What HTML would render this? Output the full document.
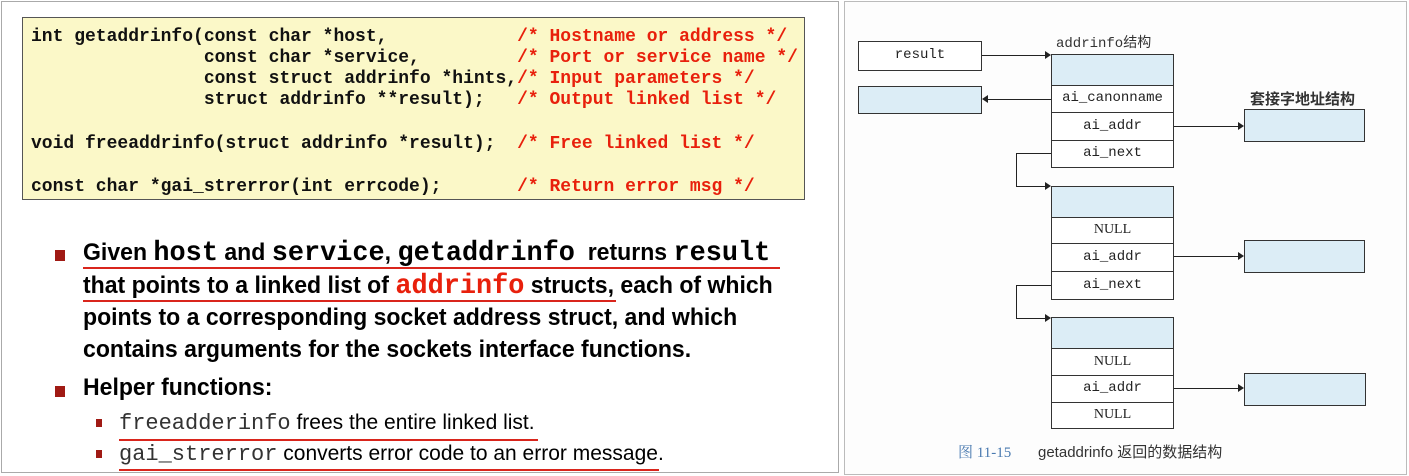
<!DOCTYPE html>
<html><head><meta charset="utf-8"><style>
body{margin:0;width:1409px;height:476px;background:#fff;position:relative;overflow:hidden;font-family:"Liberation Sans",sans-serif}
.a{position:absolute;white-space:nowrap}
.code{font-family:"Liberation Mono",monospace;font-weight:bold;font-size:18px;color:#111;line-height:21px;white-space:pre}
.r{color:#e8200c}
.b{font-weight:bold;font-size:24px;color:#000;transform:scaleX(.96);transform-origin:left top;line-height:32px}
.m{font-family:"Liberation Mono",monospace}
.b .m{font-size:28px;line-height:20px}
.ul{position:absolute;height:2px;background:#d9251c}
.sq{position:absolute;background:#a01a14}
.s{font-size:21px;transform:scaleX(1.0);transform-origin:left top}
.s .m{font-size:22px}
.bx{position:absolute;border:1.5px solid #333;box-sizing:border-box;background:#fff;font-family:"Liberation Mono",monospace;font-size:14px;color:#222;text-align:center}
.bl{background:#dcedf6}
.ln{position:absolute;background:#222}
.ar{position:absolute;width:0;height:0;border-top:4px solid transparent;border-bottom:4px solid transparent}
</style></head><body>
<div style="position:absolute;left:1px;top:1px;width:836px;height:470px;border:1px solid #aaa"></div>
<div style="position:absolute;left:22px;top:17px;width:783px;height:183px;background:#fbf8c8;border:1.5px solid #555;box-sizing:border-box"></div>
<div class="a code" style="left:31px;top:27px">int getaddrinfo(const char *host,            <span class="r">/* Hostname or address */</span></div>
<div class="a code" style="left:31px;top:48px">                const char *service,         <span class="r">/* Port or service name */</span></div>
<div class="a code" style="left:31px;top:69px">                const struct addrinfo *hints,<span class="r">/* Input parameters */</span></div>
<div class="a code" style="left:31px;top:90px">                struct addrinfo **result);   <span class="r">/* Output linked list */</span></div>
<div class="a code" style="left:31px;top:134px">void freeaddrinfo(struct addrinfo *result);  <span class="r">/* Free linked list */</span></div>
<div class="a code" style="left:31px;top:177px">const char *gai_strerror(int errcode);       <span class="r">/* Return error msg */</span></div>

<div class="sq" style="left:55px;top:250px;width:10px;height:11px"></div>
<div class="a b" style="left:83px;top:237px">Given <span class="m">host</span> and <span class="m">service</span>, <span class="m">getaddrinfo</span> &nbsp;returns <span class="m">result</span></div>
<div class="ul" style="left:83px;top:267px;width:697px"></div>
<div class="a b" style="left:83px;top:270px">that points to a linked list of <span class="m r">addrinfo</span> structs, each of which</div>
<div class="ul" style="left:83px;top:300px;width:533px"></div>
<div class="a b" style="left:83px;top:302px">points to a corresponding socket address struct, and which</div>
<div class="a b" style="left:83px;top:334px">contains arguments for the sockets interface functions.</div>
<div class="sq" style="left:55px;top:386px;width:10px;height:11px"></div>
<div class="a b" style="left:83px;top:372px">Helper functions:</div>
<div class="sq" style="left:96px;top:419px;width:6px;height:8px"></div>
<div class="a s" style="left:119px;top:411px"><span class="m" style="color:#333">freeadderinfo</span> frees the entire linked list.</div>
<div class="ul" style="left:119px;top:439px;width:419px"></div>
<div class="sq" style="left:96px;top:450px;width:6px;height:8px"></div>
<div class="a s" style="left:119px;top:442px"><span class="m" style="color:#333">gai_strerror</span> converts error code to an error message.</div>
<div class="ul" style="left:119px;top:469px;width:540px"></div>

<div style="position:absolute;left:844px;top:1px;width:561px;height:472px;border:1px solid #bbb;background:#fdfdfd"></div>
<div class="a" style="left:1056px;top:32px;font-family:'Liberation Mono','Noto Sans CJK SC',monospace;font-size:14px;color:#333">addrinfo结构</div>
<div class="a" style="left:1250px;top:88px;font-family:'Noto Sans CJK SC',sans-serif;font-size:15px;font-weight:bold;color:#333">套接字地址结构</div>
<div class="bx" style="left:858px;top:41px;width:124px;height:30px;line-height:27px">result</div>
<div class="bx bl" style="left:858px;top:86px;width:124px;height:28px"></div>

<div class="bx bl" style="left:1051px;top:54px;width:123px;height:32px"></div>
<div class="bx" style="left:1051px;top:85px;width:123px;height:28px;line-height:25px">ai_canonname</div>
<div class="bx" style="left:1051px;top:112px;width:123px;height:29px;line-height:26px">ai_addr</div>
<div class="bx" style="left:1051px;top:140px;width:123px;height:28px;line-height:25px">ai_next</div>

<div class="bx bl" style="left:1051px;top:186px;width:123px;height:32px"></div>
<div class="bx" style="left:1051px;top:217px;width:123px;height:27px;line-height:24px;font-family:'Liberation Serif',serif">NULL</div>
<div class="bx" style="left:1051px;top:243px;width:123px;height:29px;line-height:26px">ai_addr</div>
<div class="bx" style="left:1051px;top:271px;width:123px;height:29px;line-height:26px">ai_next</div>

<div class="bx bl" style="left:1051px;top:317px;width:123px;height:32px"></div>
<div class="bx" style="left:1051px;top:348px;width:123px;height:28px;line-height:25px;font-family:'Liberation Serif',serif">NULL</div>
<div class="bx" style="left:1051px;top:375px;width:123px;height:28px;line-height:25px">ai_addr</div>
<div class="bx" style="left:1051px;top:402px;width:123px;height:27px;line-height:24px;font-family:'Liberation Serif',serif">NULL</div>

<div class="bx bl" style="left:1244px;top:109px;width:121px;height:33px"></div>
<div class="bx bl" style="left:1244px;top:240px;width:121px;height:33px"></div>
<div class="bx bl" style="left:1244px;top:373px;width:122px;height:33px"></div>

<div class="ln" style="left:982px;top:55px;width:64px;height:1px"></div><div class="ar" style="left:1045px;top:51px;border-left:6px solid #222"></div>
<div class="ln" style="left:988px;top:99px;width:63px;height:1px"></div><div class="ar" style="left:982px;top:95px;border-right:6px solid #222"></div>
<div class="ln" style="left:1174px;top:126px;width:64px;height:1px"></div><div class="ar" style="left:1238px;top:122px;border-left:6px solid #222"></div>
<div class="ln" style="left:1174px;top:256px;width:64px;height:1px"></div><div class="ar" style="left:1238px;top:252px;border-left:6px solid #222"></div>
<div class="ln" style="left:1174px;top:388px;width:64px;height:1px"></div><div class="ar" style="left:1238px;top:384px;border-left:6px solid #222"></div>
<div class="ln" style="left:1016px;top:153px;width:35px;height:1px"></div>
<div class="ln" style="left:1016px;top:153px;width:1px;height:33px"></div>
<div class="ln" style="left:1016px;top:186px;width:30px;height:1px"></div><div class="ar" style="left:1045px;top:182px;border-left:6px solid #222"></div>
<div class="ln" style="left:1016px;top:285px;width:35px;height:1px"></div>
<div class="ln" style="left:1016px;top:285px;width:1px;height:33px"></div>
<div class="ln" style="left:1016px;top:318px;width:30px;height:1px"></div><div class="ar" style="left:1045px;top:314px;border-left:6px solid #222"></div>

<div class="a" style="left:958px;top:441px;font-family:'Liberation Serif','Noto Serif CJK SC',serif;font-size:15px;color:#4a7ab0">图 11-15</div>
<div class="a" style="left:1038px;top:441px;font-family:'Liberation Sans','Noto Sans CJK SC',sans-serif;font-size:15px;color:#333">getaddrinfo 返回的数据结构</div>
</body></html>
